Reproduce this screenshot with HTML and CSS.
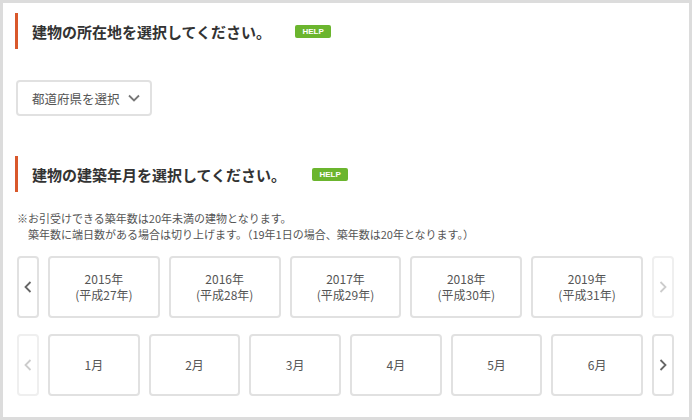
FILE: index.html
```html
<!DOCTYPE html>
<html lang="ja">

<head>
    <meta charset="UTF-8">
    <title>建物の選択</title>
    <link rel="stylesheet" href="styles.css">
</head>

<body>
    <div class="frame">
        <div class="section-title">
            <span>建物の所在地を選択してください。</span>
            <span class="help">HELP</span>
        </div>

        <div class="select-box">
            <span>都道府県を選択</span>
            <svg class="chevron" width="12" height="8" viewBox="0 0 12 8">
                <path d="M1 1.5 L6 6.5 L11 1.5" fill="none" stroke="#777" stroke-width="1.8" />
            </svg>
        </div>

        <div class="section-title second">
            <span>建物の建築年月を選択してください。</span>
            <span class="help">HELP</span>
        </div>

        <div class="note">
            <p>※お引受けできる築年数は20年未満の建物となります。</p>
            <p class="indent">築年数に端日数がある場合は切り上げます。（19年1日の場合、築年数は20年となります。）</p>
        </div>

        <!-- year carousel -->
        <div class="picker-row">
            <div class="arrow">
                <svg width="8" height="12" viewBox="0 0 8 12">
                    <path d="M6.5 1 L1.5 6 L6.5 11" fill="none" stroke="#666" stroke-width="1.8" />
                </svg>
            </div>
            <div class="item">2015年<br>(平成27年)</div>
            <div class="item">2016年<br>(平成28年)</div>
            <div class="item">2017年<br>(平成29年)</div>
            <div class="item">2018年<br>(平成30年)</div>
            <div class="item">2019年<br>(平成31年)</div>
            <div class="arrow disabled">
                <svg width="8" height="12" viewBox="0 0 8 12">
                    <path d="M1.5 1 L6.5 6 L1.5 11" fill="none" stroke="#ccc" stroke-width="1.8" />
                </svg>
            </div>
        </div>

        <!-- month carousel -->
        <div class="picker-row">
            <div class="arrow disabled">
                <svg width="8" height="12" viewBox="0 0 8 12">
                    <path d="M6.5 1 L1.5 6 L6.5 11" fill="none" stroke="#ccc" stroke-width="1.8" />
                </svg>
            </div>
            <div class="item">1月</div>
            <div class="item">2月</div>
            <div class="item">3月</div>
            <div class="item">4月</div>
            <div class="item">5月</div>
            <div class="item">6月</div>
            <div class="arrow">
                <svg width="8" height="12" viewBox="0 0 8 12">
                    <path d="M1.5 1 L6.5 6 L1.5 11" fill="none" stroke="#666" stroke-width="1.8" />
                </svg>
            </div>
        </div>
    </div>
</body>

</html>
```

FILE: styles.css
```css
body {
    margin: 0;
    font-family: "Noto Sans CJK JP", "Noto Sans", sans-serif;
    color: #333;
    background-color: #fff;
}

.frame {
    width: 692px;
    height: 420px;
    box-sizing: border-box;
    border: 3px solid #dcdcdc;
    padding: 10px 15px 0 12px;
}

.section-title {
    display: flex;
    align-items: center;
    height: 36px;
    border-left: 3px solid #d9582b;
    padding-left: 14px;
    font-size: 15px;
    font-weight: bold;
    color: #333;
}

.section-title.second {
    margin-top: 40px;
}

.help {
    margin-left: 24px;
    width: 36px;
    height: 13px;
    line-height: 13px;
    background-color: #6bb52e;
    color: #fff;
    font-family: "Liberation Sans", sans-serif;
    font-size: 8px;
    font-weight: bold;
    text-align: center;
    border-radius: 2px;
}

.second .help {
    margin-left: 26px;
}

.select-box {
    display: inline-flex;
    align-items: center;
    margin-top: 31px;
    height: 36px;
    box-sizing: border-box;
    padding: 0 10px 0 14px;
    border: 2px solid #e1e1e1;
    border-radius: 4px;
    font-size: 12.5px;
    color: #555;
    margin-left: 1px;
}

.chevron {
    margin-left: 8px;
}

.note {
    margin-top: 18px;
    margin-left: 2px;
    font-size: 11px;
    line-height: 16px;
    color: #555;
}

.note p {
    margin: 0;
}

.note .indent {
    padding-left: 11px;
}

.picker-row {
    display: flex;
    gap: 9px;
    margin-top: 14px;
    margin-left: 2px;
    height: 62px;
}

.picker-row + .picker-row {
    margin-top: 16px;
}

.arrow {
    width: 22px;
    flex: none;
    box-sizing: border-box;
    border: 2px solid #e1e1e1;
    border-radius: 4px;
    display: flex;
    align-items: center;
    justify-content: center;
}

.arrow.disabled {
    border-color: #efefef;
}

.item {
    flex: 1;
    box-sizing: border-box;
    border: 2px solid #e1e1e1;
    border-radius: 4px;
    display: flex;
    align-items: center;
    justify-content: center;
    text-align: center;
    font-size: 12px;
    line-height: 16px;
    color: #555;
}
```
